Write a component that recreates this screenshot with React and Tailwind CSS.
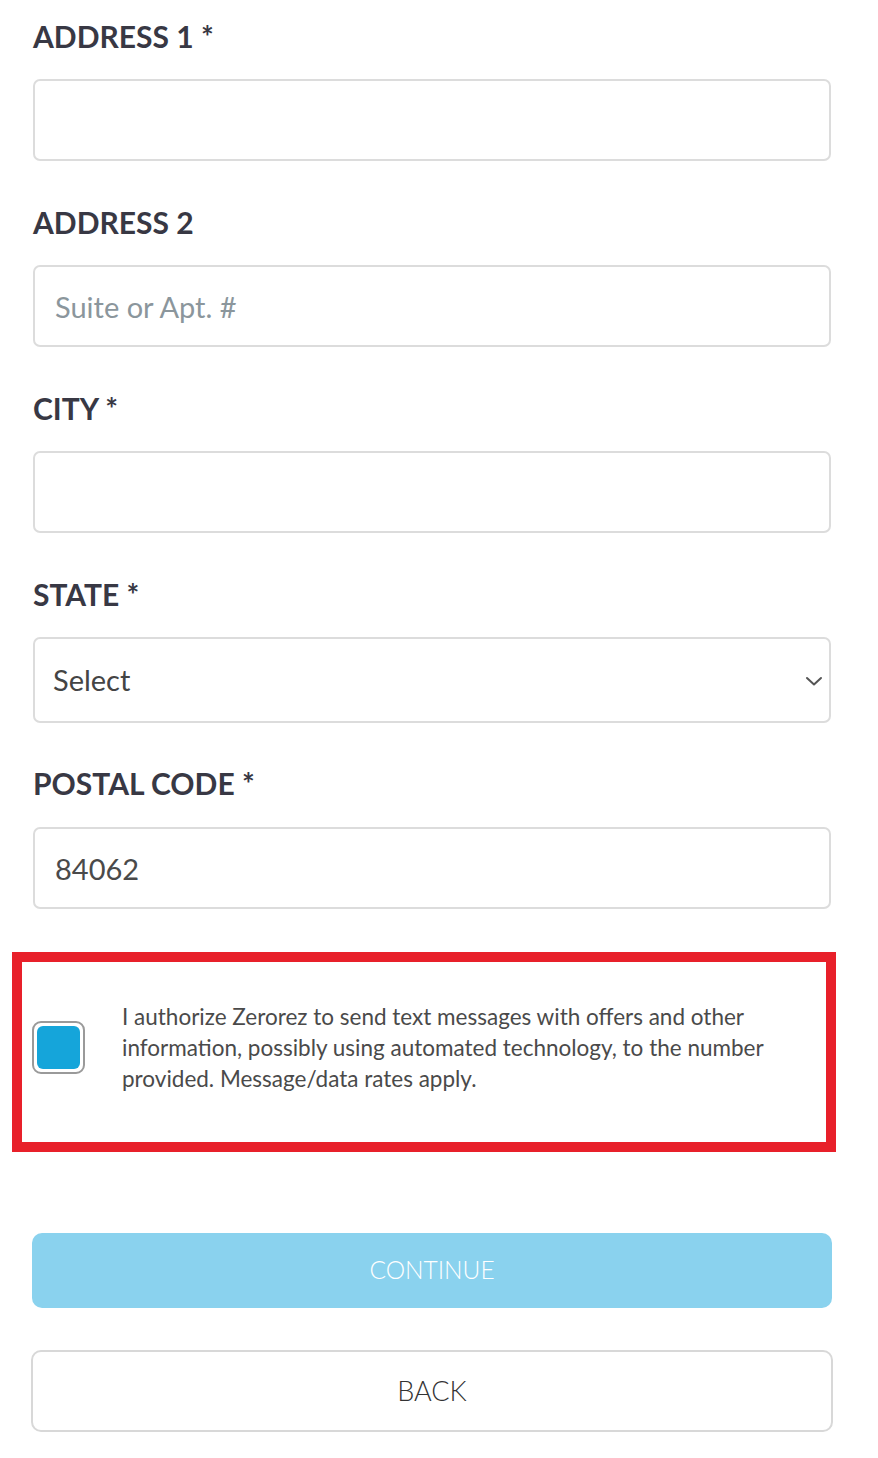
import { useState } from 'react'

const FONT = { fontFamily: 'Lato, "Noto Sans", sans-serif' }

// one labelled text field
const Field = ({ label, placeholder = '', defaultValue = '' }) => (
  <div className="mb-[41px]">
    <div className="h-[40px] text-[30px] leading-[40px] font-bold text-[#383844] mb-[23px]">{label}</div>
    <input
      type="text"
      placeholder={placeholder}
      defaultValue={defaultValue}
      className="block w-[798px] h-[82px] rounded-[7px] border-2 border-[#dcdcdc] bg-white px-[20px] text-[29px] text-[#4a4a4a] placeholder:text-[#8b969c] outline-none"
      style={FONT}
    />
  </div>
)

export default function App() {
  const [agreed, setAgreed] = useState(true)

  return (
    <div className="w-[878px] min-h-[1458px] bg-white pt-[16px] pl-[33px]" style={FONT}>
      <Field label="ADDRESS 1 *" />
      <Field label="ADDRESS 2" placeholder="Suite or Apt. #" />
      <Field label="CITY *" />

      {/* State select */}
      <div className="mb-[40px]">
        <div className="h-[40px] text-[30px] leading-[40px] font-bold text-[#383844] mb-[23px]">STATE *</div>
        <div className="flex items-center justify-between w-[798px] h-[86px] rounded-[7px] border-2 border-[#dcdcdc] pl-[18px] pr-[6px]">
          <span className="text-[29px] text-[#444]">Select</span>
          <svg width="18" height="12" viewBox="0 0 18 12" fill="none" className="mt-[2px]">
            <polyline points="2,3 9,9.5 16,3" stroke="#555" strokeWidth="2" strokeLinecap="round" strokeLinejoin="round" />
          </svg>
        </div>
      </div>

      <div className="mb-[43px]">
        <div className="h-[40px] text-[30px] leading-[40px] font-bold text-[#383844] mb-[24px]">POSTAL CODE *</div>
        <input
          type="text"
          defaultValue="84062"
          className="block w-[798px] h-[82px] rounded-[7px] border-2 border-[#dcdcdc] bg-white px-[20px] text-[29px] text-[#4a4a4a] outline-none"
          style={FONT}
        />
      </div>

      {/* SMS consent */}
      <div className="-ml-[21px] w-[824px] h-[200px] border-[10px] border-[#e8202a] flex items-center pl-[10px] pb-[10px]">
        <button
          onClick={() => setAgreed(!agreed)}
          className="shrink-0 w-[53px] h-[53px] rounded-[9px] border-2 border-[#9a9a9a] p-[3px] bg-white"
        >
          <div className={`w-full h-full rounded-[6px] ${agreed ? 'bg-[#15a5da]' : 'bg-white'}`} />
        </button>
        <p className="ml-[37px] w-[680px] text-[22.5px] leading-[31px] text-[#4a4a4a]">
          I authorize Zerorez to send text messages with offers and other information, possibly using automated technology, to the number provided. Message/data rates apply.
        </p>
      </div>

      <button className="block mt-[81px] -ml-[1px] w-[800px] h-[75px] rounded-[10px] bg-[#8ad2ee] text-white text-[24.5px] font-light" style={FONT}>
        CONTINUE
      </button>

      <button className="block mt-[42px] -ml-[2px] w-[802px] h-[82px] rounded-[10px] border-2 border-[#d8d8d8] bg-white text-[#333] text-[27px] font-light" style={FONT}>
        BACK
      </button>
    </div>
  )
}
